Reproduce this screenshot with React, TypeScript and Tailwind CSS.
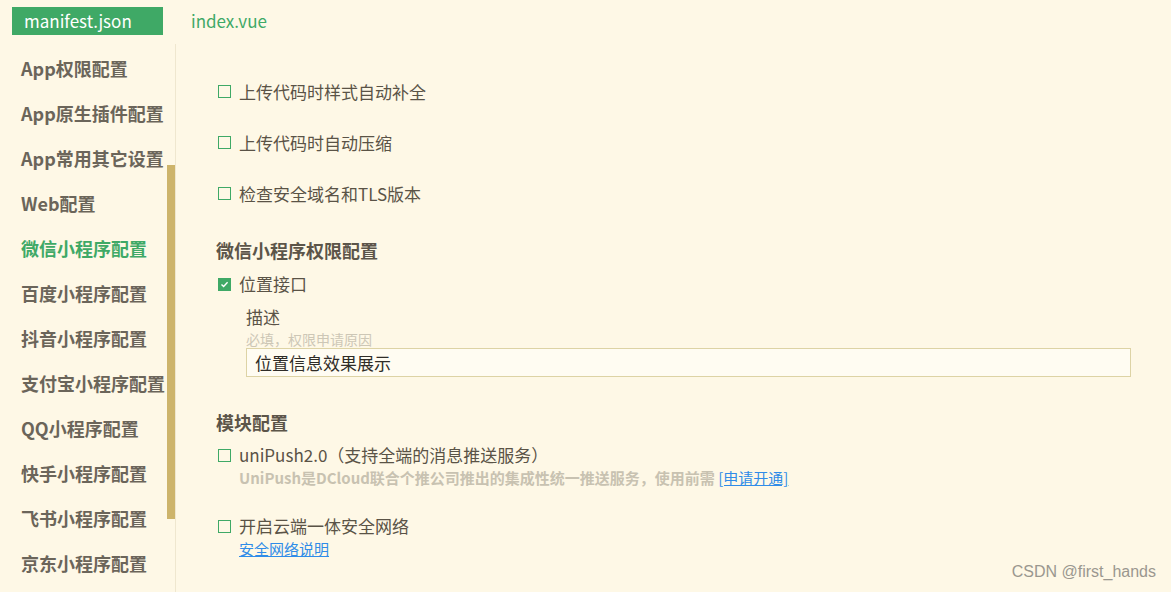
import React from 'react'

const FONT = "font-['Noto_Sans_CJK_SC','Noto_Sans',sans-serif]"

const NAV = [
  'App权限配置',
  'App原生插件配置',
  'App常用其它设置',
  'Web配置',
  '微信小程序配置',
  '百度小程序配置',
  '抖音小程序配置',
  '支付宝小程序配置',
  'QQ小程序配置',
  '快手小程序配置',
  '飞书小程序配置',
  '京东小程序配置',
]

function Box({ checked }: { checked?: boolean }) {
  if (checked) {
    return (
      <span className="ml-[2px] flex h-[13px] w-[13px] shrink-0 items-center justify-center bg-[#3fa966]">
        <svg width="9" height="9" viewBox="0 0 9 9" fill="none">
          <path d="M1.5 4.6 L3.6 6.6 L7.6 2.3" stroke="#fff" strokeWidth="1.4" />
        </svg>
      </span>
    )
  }
  return <span className="ml-[2px] h-[13px] w-[13px] shrink-0 border border-[#3fa966]" />
}

function Check({ label, checked, className = '' }: { label: string; checked?: boolean; className?: string }) {
  return (
    <div className={`flex items-center gap-[8px] ${className}`}>
      <Box checked={checked} />
      <span className="text-[17px] leading-6 text-[#5a5346]">{label}</span>
    </div>
  )
}

export default function App() {
  return (
    <div className={`relative flex h-[592px] w-[1171px] flex-col overflow-hidden bg-[#fef8e6] ${FONT}`}>
      {/* tabs */}
      <div className="flex h-[44px] shrink-0 items-start pt-[7px] pl-[12px]">
        <div className="flex h-[28px] w-[151px] items-center bg-[#3fa966] pl-[12px] text-[17px] text-white">
          manifest.json
        </div>
        <div className="ml-[28px] flex h-[28px] items-center text-[17px] text-[#3fa966]">index.vue</div>
      </div>

      <div className="flex min-h-0 flex-1">
        {/* sidebar */}
        <div className="relative w-[176px] shrink-0 border-r border-[#efe7cf] pt-[2px]">
          {NAV.map((n) => (
            <div
              key={n}
              className={`flex h-[45px] items-center pl-[21px] text-[18px] font-bold whitespace-nowrap ${
                n === '微信小程序配置' ? 'text-[#3fa966]' : 'text-[#6b655a]'
              }`}
            >
              {n}
            </div>
          ))}
          <div className="absolute top-[121px] left-[167px] h-[354px] w-[8px] bg-[#cdb46b]" />
        </div>

        {/* content */}
        <div className="flex min-w-0 flex-1 flex-col overflow-hidden pt-[22px] pr-[40px] pl-[40px]">
          <Check label="上传代码时样式自动补全" className="h-[51px]" />
          <Check label="上传代码时自动压缩" className="h-[51px]" />
          <Check label="检查安全域名和TLS版本" className="h-[51px]" />

          <div className="mt-[19px] text-[18px] leading-6 font-bold text-[#5c5549]">微信小程序权限配置</div>
          <Check label="位置接口" checked className="mt-[10px]" />
          <div className="mt-[9px] pl-[30px] text-[17px] leading-6 text-[#5a5346]">描述</div>
          <div className="mt-[1px] pl-[30px] text-[14px] leading-[18px] text-[#cdc7b6]">必填，权限申请原因</div>
          <div className="ml-[30px] flex h-[29px] items-center border border-[#ddd3a5] bg-[#fffcf2] pl-[8px] text-[17px] text-[#2f2c27]">
            位置信息效果展示
          </div>

          <div className="mt-[33px] text-[18px] leading-6 font-bold text-[#5c5549]">模块配置</div>
          <Check label="uniPush2.0（支持全端的消息推送服务）" className="mt-[9px]" />
          <div className="mt-[1px] pl-[23px] text-[15px] leading-5 font-bold text-[#c8c2b1]">
            UniPush是DCloud联合个推公司推出的集成性统一推送服务，使用前需{' '}
            <a className="font-normal text-[#2f8ce8] underline">[申请开通]</a>
          </div>
          <Check label="开启云端一体安全网络" className="mt-[26px]" />
          <div className="mt-[1px] pl-[23px] text-[15px] leading-5">
            <a className="text-[#2f8ce8] underline">安全网络说明</a>
          </div>
        </div>
      </div>

      <div className="absolute right-[15px] bottom-[8px] font-['Liberation_Sans',sans-serif] text-[16px] text-[#9a978f]">
        CSDN @first_hands
      </div>
    </div>
  )
}
